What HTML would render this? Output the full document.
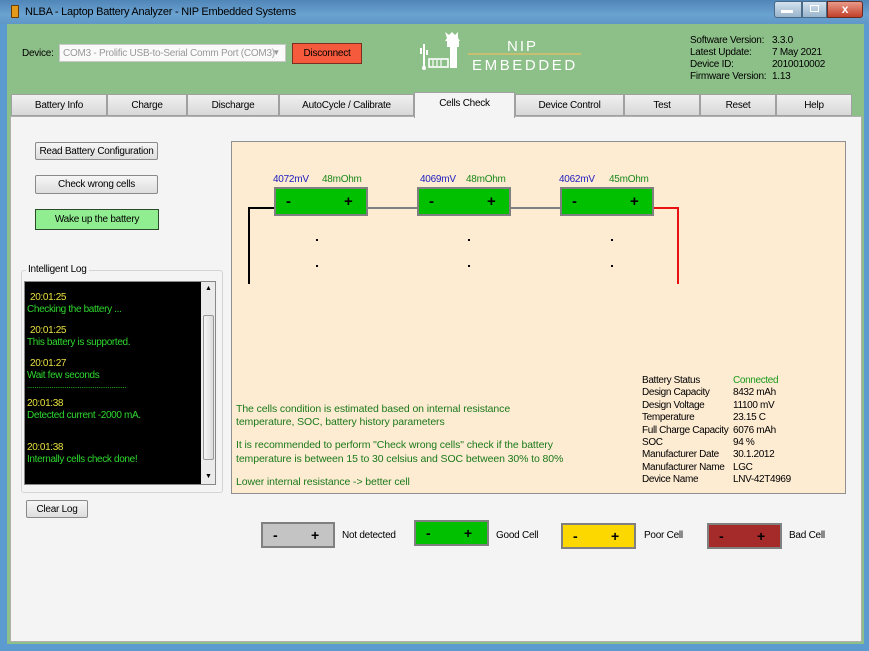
<!DOCTYPE html>
<html><head><style>
*{margin:0;padding:0;box-sizing:border-box}
body{width:869px;height:651px;overflow:hidden;font-family:"Liberation Sans",sans-serif;font-size:10px;letter-spacing:-0.25px;background:#5b9bd0;position:relative;color:#000;white-space:nowrap}
.a{position:absolute}
.btn{position:absolute;border:1px solid #8a8a8a;border-radius:2px;background:linear-gradient(#f6f6f6,#dedede);text-align:center;font-size:10px;padding-top:1px}
.tab{position:absolute;top:94px;height:22px;border:1px solid #a0a0a0;background:linear-gradient(#f0f0f0,#d8d8d8);text-align:center;line-height:21px;font-size:10px}
.cell{position:absolute;height:29px;border:2px solid #808080;background:#00c000;font-size:15px;font-weight:bold}
.cell span{position:absolute;top:4px}
.mv{position:absolute;color:#2020c0;font-size:10px}
.oh{position:absolute;color:#1a8a1a;font-size:10px}
.dot{position:absolute;width:2px;height:2px;background:#000}
.log div{line-height:12px}
</style></head><body>
<div class="a" style="left:0;top:0;width:869px;height:24px;background:linear-gradient(#4f86b8,#6aa2d0 60%,#5f98c8)"></div>
<div class="a" style="left:11px;top:5px;width:8px;height:13px;background:#e39a1a;border:1px solid #6b3b00;border-radius:1px"></div>
<div class="a" style="left:25px;top:6px;font-size:11px;color:#000">NLBA - Laptop Battery Analyzer - NIP Embedded Systems</div>
<div class="a" style="left:774px;top:1px;width:28px;height:17px;background:linear-gradient(#d4e2ee,#98b4cc);border:1px solid #4a6a88;border-radius:3px 0 0 3px"></div>
<div class="a" style="left:781px;top:10px;width:12px;height:3px;background:#fff"></div>
<div class="a" style="left:802px;top:1px;width:25px;height:17px;background:linear-gradient(#d4e2ee,#98b4cc);border:1px solid #4a6a88"></div>
<div class="a" style="left:810px;top:5px;width:9px;height:7px;border:1px solid #fff"></div>
<div class="a" style="left:827px;top:1px;width:36px;height:17px;background:linear-gradient(#e89a88,#c2402a);border:1px solid #6a2a20;border-radius:0 3px 3px 0;color:#fff;font-weight:bold;text-align:center;font-size:12px;line-height:15px">x</div>

<div class="a" style="left:7px;top:24px;width:857px;height:620px;background:#8dbf88"></div>
<div class="a" style="left:22px;top:48px;">Device:</div>
<div class="a" style="left:59px;top:44px;width:227px;height:18px;background:#fafafa;border:1px solid #c8c8c8;color:#999;padding:3px 3px;font-size:10px;overflow:hidden">COM3 - Prolific USB-to-Serial Comm Port (COM3)<span style="position:absolute;right:5px;top:3px;font-size:8px">▼</span></div>
<div class="a" style="left:292px;top:43px;width:70px;height:21px;background:#f65a3c;border:1px solid #7a3020;text-align:center;line-height:20px">Disconnect</div>

<svg class="a" style="left:418px;top:30px" width="170" height="42">
<g fill="#fff">
<path d="M27 2 l4 3 l3 -3 l3 3 l3 -3 l0 6 l2 3 l-15 0 l2 -3 z"/>
<rect x="29" y="11" width="12" height="6"/>
<rect x="32" y="17" width="7" height="21"/>
<rect x="5" y="14" width="2" height="24"/><rect x="2" y="18" width="2" height="6"/><rect x="8" y="20" width="2" height="5"/>
<circle cx="6" cy="38" r="2"/></g>
<rect x="11" y="29" width="19" height="8" fill="none" stroke="#fff" stroke-width="1.6"/>
<g stroke="#fff" stroke-width="1.2"><line x1="15" y1="30" x2="15" y2="36"/><line x1="19" y1="30" x2="19" y2="36"/><line x1="23" y1="30" x2="23" y2="36"/></g>
<rect x="50" y="23" width="113" height="2" fill="#c8c070"/>
<text x="89" y="21" fill="#fff" font-size="15" font-family="Liberation Sans" letter-spacing="2">NIP</text>
<text x="54" y="40" fill="#fff" font-size="15" font-family="Liberation Sans" letter-spacing="2.6">EMBEDDED</text>
</svg>

<div class="a" style="left:690px;top:35px;line-height:12px;font-size:10px">Software Version:<br>Latest Update:<br>Device ID:<br>Firmware Version:</div>
<div class="a" style="left:772px;top:35px;line-height:12px;font-size:10px">3.3.0<br>7 May 2021<br>2010010002<br>1.13</div>

<div class="tab" style="left:11px;width:96px">Battery Info</div>
<div class="tab" style="left:107px;width:80px">Charge</div>
<div class="tab" style="left:187px;width:92px">Discharge</div>
<div class="tab" style="left:279px;width:135px">AutoCycle / Calibrate</div>
<div class="tab" style="left:414px;top:92px;height:26px;width:101px;background:#f4f4f4;border-bottom:none;z-index:2">Cells Check</div>
<div class="tab" style="left:515px;width:109px">Device Control</div>
<div class="tab" style="left:624px;width:76px">Test</div>
<div class="tab" style="left:700px;width:76px">Reset</div>
<div class="tab" style="left:776px;width:76px">Help</div>

<div class="a" style="left:10px;top:116px;width:852px;height:526px;background:#f4f4f4;border:1px solid #b0b0b0"></div>

<div class="btn" style="left:35px;top:142px;width:123px;height:18px;line-height:15px">Read Battery Configuration</div>
<div class="btn" style="left:35px;top:175px;width:123px;height:19px;line-height:16px">Check wrong cells</div>
<div class="a" style="left:35px;top:209px;width:124px;height:21px;background:#90ee90;border:1px solid #2a4a2a;text-align:center;line-height:20px">Wake up the battery</div>

<div class="a" style="left:21px;top:270px;width:202px;height:223px;border:1px solid #d4d4d4;border-radius:3px"></div>
<div class="a" style="left:26px;top:264px;background:#f4f4f4;padding:0 2px">Intelligent Log</div>
<div class="a log" style="left:24px;top:281px;width:192px;height:204px;background:#000;border:1px solid #888;padding:10px 0 0 2px;font-size:10px;letter-spacing:-0.35px">
<div style="color:#e8e040;padding-left:3px">20:01:25</div><div style="color:#2ed82e">Checking the battery ...</div>
<div style="color:#e8e040;padding-left:3px;margin-top:9px">20:01:25</div><div style="color:#2ed82e">This battery is supported.</div>
<div style="color:#e8e040;padding-left:3px;margin-top:9px">20:01:27</div><div style="color:#2ed82e">Wait few seconds</div>
<div style="color:#2ed82e;font-size:8px;line-height:8px">.....................................................</div>
<div style="color:#e8e040;margin-top:8px">20:01:38</div><div style="color:#2ed82e">Detected current -2000 mA.</div>
<div style="color:#e8e040;margin-top:20px">20:01:38</div><div style="color:#2ed82e">Internally cells check done!</div>
</div>
<div class="a" style="left:201px;top:282px;width:14px;height:202px;background:#ebebeb"></div>
<div class="a" style="left:203px;top:315px;width:11px;height:145px;background:linear-gradient(90deg,#f4f4f4,#dcdcdc);border:1px solid #999;border-radius:2px"></div>
<div class="a" style="left:205px;top:285px;font-size:7px">▲</div>
<div class="a" style="left:205px;top:473px;font-size:7px">▼</div>
<div class="btn" style="left:26px;top:500px;width:62px;height:18px;line-height:15px">Clear Log</div>

<div class="a" style="left:231px;top:141px;width:615px;height:353px;background:#fdebd2;border:1px solid #909090"></div>
<div class="a" style="left:248px;top:207px;width:27px;height:2px;background:#000"></div>
<div class="a" style="left:248px;top:207px;width:2px;height:77px;background:#000"></div>
<div class="a" style="left:366px;top:207px;width:53px;height:2px;background:#808080"></div>
<div class="a" style="left:509px;top:207px;width:53px;height:2px;background:#808080"></div>
<div class="a" style="left:652px;top:207px;width:27px;height:2px;background:#e81010"></div>
<div class="a" style="left:677px;top:207px;width:2px;height:77px;background:#e81010"></div>

<div class="mv" style="left:273px;top:174px">4072mV</div><div class="oh" style="left:322px;top:174px">48mOhm</div>
<div class="mv" style="left:420px;top:174px">4069mV</div><div class="oh" style="left:466px;top:174px">48mOhm</div>
<div class="mv" style="left:559px;top:174px">4062mV</div><div class="oh" style="left:609px;top:174px">45mOhm</div>
<div class="cell" style="left:274px;top:187px;width:94px"><span style="left:10px">-</span><span style="left:68px">+</span></div>
<div class="cell" style="left:417px;top:187px;width:94px"><span style="left:10px">-</span><span style="left:68px">+</span></div>
<div class="cell" style="left:560px;top:187px;width:94px"><span style="left:10px">-</span><span style="left:68px">+</span></div>
<div class="dot" style="left:316px;top:239px"></div><div class="dot" style="left:316px;top:265px"></div>
<div class="dot" style="left:468px;top:239px"></div><div class="dot" style="left:468px;top:265px"></div>
<div class="dot" style="left:611px;top:239px"></div><div class="dot" style="left:611px;top:265px"></div>

<div class="a" style="left:236px;top:403px;color:#1a7a1a;line-height:13px;font-size:10.5px;letter-spacing:-0.1px">The cells condition is estimated based on internal resistance<br>temperature, SOC, battery history parameters</div>
<div class="a" style="left:236px;top:438px;color:#1a7a1a;line-height:14px;font-size:10.5px;letter-spacing:-0.1px">It is recommended to perform "Check wrong cells" check if the battery<br>temperature is between 15 to 30 celsius and SOC between 30% to 80%</div>
<div class="a" style="left:236px;top:476px;color:#1a7a1a;font-size:10.5px;letter-spacing:-0.1px">Lower internal resistance -&gt; better cell</div>

<div class="a" style="left:642px;top:375px;line-height:12.4px;font-size:10px;letter-spacing:-0.35px">Battery Status<br>Design Capacity<br>Design Voltage<br>Temperature<br>Full Charge Capacity<br>SOC<br>Manufacturer Date<br>Manufacturer Name<br>Device Name</div>
<div class="a" style="left:733px;top:375px;line-height:12.4px;font-size:10px;letter-spacing:-0.35px"><span style="color:#1a9a1a">Connected</span><br>8432 mAh<br>11100 mV<br>23.15 C<br>6076 mAh<br>94 %<br>30.1.2012<br>LGC<br>LNV-42T4969</div>

<div class="cell" style="left:261px;top:522px;width:74px;height:26px;background:#c4c4c4;font-size:14px"><span style="left:10px;top:3px">-</span><span style="left:48px;top:3px">+</span></div>
<div class="a" style="left:342px;top:530px">Not detected</div>
<div class="cell" style="left:414px;top:520px;width:75px;height:26px;font-size:14px"><span style="left:10px;top:3px">-</span><span style="left:48px;top:3px">+</span></div>
<div class="a" style="left:496px;top:530px">Good Cell</div>
<div class="cell" style="left:561px;top:523px;width:75px;height:26px;background:#fdd800;font-size:14px"><span style="left:10px;top:3px">-</span><span style="left:48px;top:3px">+</span></div>
<div class="a" style="left:644px;top:530px">Poor Cell</div>
<div class="cell" style="left:707px;top:523px;width:75px;height:26px;background:#a52a2a;font-size:14px"><span style="left:10px;top:3px">-</span><span style="left:48px;top:3px">+</span></div>
<div class="a" style="left:789px;top:530px">Bad Cell</div>
</body></html>
